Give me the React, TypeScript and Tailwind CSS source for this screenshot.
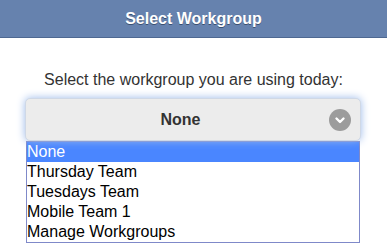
export default function App() {
  const options = ['None', 'Thursday Team', 'Tuesdays Team', 'Mobile Team 1', 'Manage Workgroups'];
  return (
    <div className="w-[387px] h-[247px] bg-white font-['Liberation_Sans',Arial,sans-serif] overflow-hidden">
      {/* Header */}
      <div className="h-[38px] bg-[#6682ae] border-b border-[#4e6891] flex items-center justify-center">
        <h1 className="text-white font-bold text-[16px] [text-shadow:0_1px_0_#3a4f70]">Select Workgroup</h1>
      </div>

      <p className="mt-[32px] text-center text-[16px] leading-[19px] text-[#333]">
        Select the workgroup you are using today:
      </p>

      <div className="mt-[9px] ml-[25px] w-[336px]">
        <div className="h-[43px] rounded-[5px] bg-[#ececec] border border-[#cfd8e6] shadow-[0_0_9px_#9bb9ea] flex items-center pr-[25px] relative">
          <span className="flex-1 text-center font-bold text-[16px] text-[#333]">None</span>
          <span className="absolute right-[9px] top-[10px] w-[22px] h-[22px] rounded-full bg-[#9c9c9c] flex items-center justify-center">
            <svg width="12" height="12" viewBox="0 0 12 12">
              <path d="M2.5 4.5 L6 8 L9.5 4.5" stroke="white" strokeWidth="2.4" fill="none" strokeLinecap="round" strokeLinejoin="round" />
            </svg>
          </span>
        </div>
        <ul className="ml-[1px] w-[334px] border border-[#7f89c9] bg-white">
          {options.map((o, i) => (
            <li
              key={o}
              className={`h-[20px] leading-[20px] text-[16px] ${i === 0 ? 'bg-[#4a86ff] text-white' : 'text-black'}`}
            >
              {o}
            </li>
          ))}
        </ul>
      </div>
    </div>
  );
}
